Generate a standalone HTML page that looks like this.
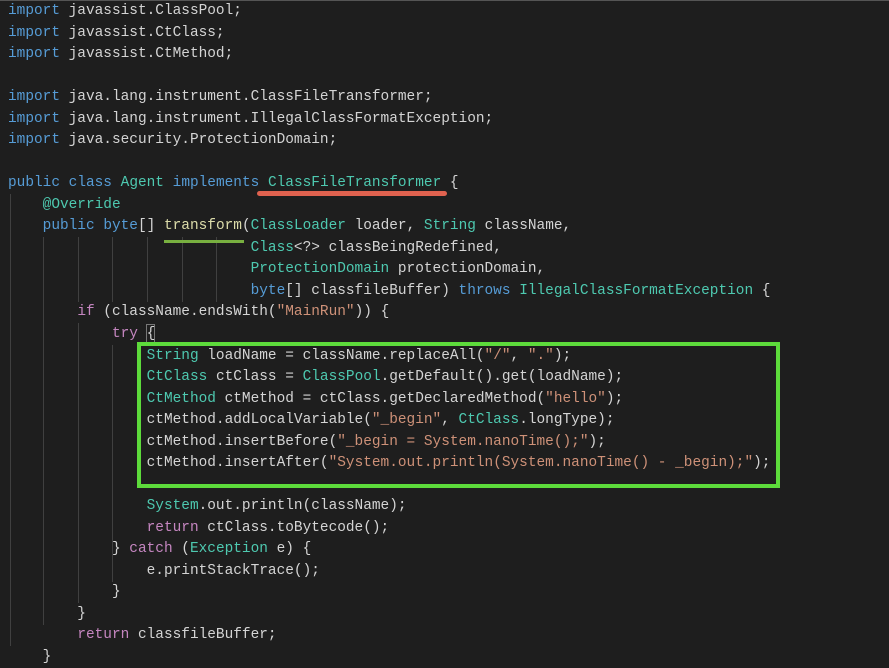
<!DOCTYPE html>
<html><head><style>
body{margin:0;width:889px;height:667px;overflow:hidden;background:#1e1e1e;position:relative}
pre{position:absolute;left:8px;top:1px;margin:0;font-family:"Liberation Mono",monospace;font-size:14.45px;line-height:21.53px;color:#d4d4d4;white-space:pre;tab-size:4}
.k{color:#569cd6}.t{color:#4ec9b0}.f{color:#dcdcaa}.s{color:#ce9178}.c{color:#c586c0}
.g{position:absolute;width:1px;background:#404040}
</style></head><body>
<div style="position:absolute;left:0;top:0;width:889px;height:1px;background:#555"></div>
<div class="g" style="left:10px;top:194px;height:452px"></div>
<div class="g" style="left:43px;top:237px;height:388px"></div>
<div class="g" style="left:78px;top:237px;height:65px"></div>
<div class="g" style="left:78px;top:323px;height:280px"></div>
<div class="g" style="left:112px;top:237px;height:65px"></div>
<div class="g" style="left:112px;top:345px;height:237px"></div>
<div class="g" style="left:147px;top:237px;height:65px"></div>
<div class="g" style="left:182px;top:237px;height:65px"></div>
<div class="g" style="left:216px;top:237px;height:65px"></div>
<div style="position:absolute;left:146px;top:324px;width:9px;height:19px;border:1px solid #777;box-sizing:border-box"></div>
<pre><span class="k">import</span> javassist.ClassPool;
<span class="k">import</span> javassist.CtClass;
<span class="k">import</span> javassist.CtMethod;

<span class="k">import</span> java.lang.instrument.ClassFileTransformer;
<span class="k">import</span> java.lang.instrument.IllegalClassFormatException;
<span class="k">import</span> java.security.ProtectionDomain;

<span class="k">public</span> <span class="k">class</span> <span class="t">Agent</span> <span class="k">implements</span> <span class="t">ClassFileTransformer</span> {
    <span class="t">@Override</span>
    <span class="k">public</span> <span class="k">byte</span>[] <span class="f">transform</span>(<span class="t">ClassLoader</span> loader, <span class="t">String</span> className,
                            <span class="t">Class</span>&lt;?&gt; classBeingRedefined,
                            <span class="t">ProtectionDomain</span> protectionDomain,
                            <span class="k">byte</span>[] classfileBuffer) <span class="k">throws</span> <span class="t">IllegalClassFormatException</span> {
        <span class="c">if</span> (className.endsWith(<span class="s">"MainRun"</span>)) {
            <span class="c">try</span> {
                <span class="t">String</span> loadName = className.replaceAll(<span class="s">"/"</span>, <span class="s">"."</span>);
                <span class="t">CtClass</span> ctClass = <span class="t">ClassPool</span>.getDefault().get(loadName);
                <span class="t">CtMethod</span> ctMethod = ctClass.getDeclaredMethod(<span class="s">"hello"</span>);
                ctMethod.addLocalVariable(<span class="s">"_begin"</span>, <span class="t">CtClass</span>.longType);
                ctMethod.insertBefore(<span class="s">"_begin = System.nanoTime();"</span>);
                ctMethod.insertAfter(<span class="s">"System.out.println(System.nanoTime() - _begin);"</span>);

                <span class="t">System</span>.out.println(className);
                <span class="c">return</span> ctClass.toBytecode();
            } <span class="c">catch</span> (<span class="t">Exception</span> e) {
                e.printStackTrace();
            }
        }
        <span class="c">return</span> classfileBuffer;
    }</pre>
<div style="position:absolute;left:257px;top:191px;width:190px;height:5px;border-radius:3px;background:#e0624f"></div>
<div style="position:absolute;left:164px;top:240px;width:80px;height:3px;background:#78b040"></div>
<div style="position:absolute;left:137px;top:342px;width:643px;height:146px;border:4px solid #5ddb3b;box-sizing:border-box"></div>
</body></html>
